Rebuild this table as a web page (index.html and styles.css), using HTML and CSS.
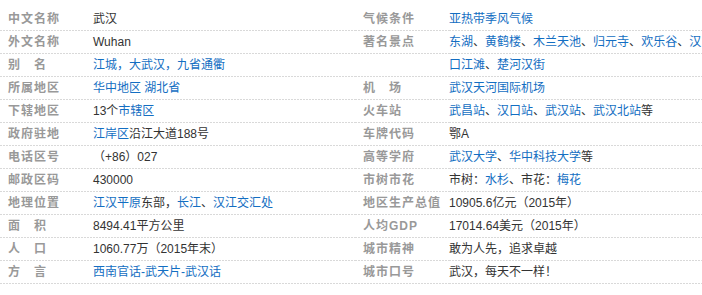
FILE: index.html
```html
<!DOCTYPE html>
<html lang="zh-CN">
<head>
<meta charset="utf-8">
<title>武汉 基本信息</title>
<link rel="stylesheet" href="styles.css">
</head>
<body>
<div class="basic-info">
  <dl class="block block-left">
    <dt>中文名称</dt><dd>武汉</dd>
    <dt>外文名称</dt><dd>Wuhan</dd>
    <dt>别　名</dt><dd><a>江城，大武汉，九省通衢</a></dd>
    <dt>所属地区</dt><dd><a>华中地区</a> <a>湖北省</a></dd>
    <dt>下辖地区</dt><dd>13个<a>市辖区</a></dd>
    <dt>政府驻地</dt><dd><a>江岸区</a>沿江大道188号</dd>
    <dt>电话区号</dt><dd>（+86）027</dd>
    <dt>邮政区码</dt><dd>430000</dd>
    <dt>地理位置</dt><dd><a>江汉平原</a>东部，<a>长江</a>、<a>汉江交汇处</a></dd>
    <dt>面　积</dt><dd>8494.41平方公里</dd>
    <dt>人　口</dt><dd>1060.77万（2015年末）</dd>
    <dt>方　言</dt><dd><a>西南官话-武天片-武汉话</a></dd>
  </dl>
  <dl class="block block-right">
    <dt>气候条件</dt><dd><a>亚热带季风气候</a></dd>
    <dt>著名景点</dt><dd class="span2"><a>东湖</a>、<a>黄鹤楼</a>、<a>木兰天池</a>、<a>归元寺</a>、<a>欢乐谷</a>、<a>汉口江滩</a>、<a>楚河汉街</a></dd>
    <dt class="empty"></dt>
    <dt>机　场</dt><dd><a>武汉天河国际机场</a></dd>
    <dt>火车站</dt><dd><a>武昌站</a>、<a>汉口站</a>、<a>武汉站</a>、<a>武汉北站</a>等</dd>
    <dt>车牌代码</dt><dd>鄂A</dd>
    <dt>高等学府</dt><dd><a>武汉大学</a>、<a>华中科技大学</a>等</dd>
    <dt>市树市花</dt><dd>市树：<a>水杉</a>、市花：<a>梅花</a></dd>
    <dt>地区生产总值</dt><dd>10905.6亿元（2015年）</dd>
    <dt>人均GDP</dt><dd>17014.64美元（2015年）</dd>
    <dt>城市精神</dt><dd>敢为人先，追求卓越</dd>
    <dt>城市口号</dt><dd>武汉，每天不一样！</dd>
  </dl>
</div>
</body>
</html>
```
FILE: styles.css
```css
html, body {
  margin: 0;
  padding: 0;
  background: #fff;
}

body {
  padding-top: 8px;
  font-family: "Liberation Sans", "Noto Sans CJK SC", sans-serif;
  font-size: 12px;
  color: #333;
}

.basic-info {
  display: flex;
  width: 702px;
}

.block {
  margin: 0;
  display: grid;
  grid-auto-rows: 23px;
}

.block-left {
  width: 355px;
  grid-template-columns: 93px 1fr;
}

.block-right {
  flex: 1;
  min-width: 0;
  grid-template-columns: 94px 1fr;
}

.block dt,
.block dd {
  margin: 0;
  height: 23px;
  box-sizing: border-box;
  line-height: 22px;
  white-space: nowrap;
  background-image: linear-gradient(to right, #d9d9d9 2px, transparent 2px);
  background-size: 3px 1px;
  background-repeat: repeat-x;
  background-position: 0 100%;
}

.block dt {
  padding-left: 8px;
  color: #999;
  font-weight: bold;
  letter-spacing: 1px;
}

.block dd.span2 {
  grid-row: span 2;
  height: 46px;
  line-height: 23px;
  white-space: normal;
  background-image:
    linear-gradient(to right, #d9d9d9 2px, transparent 2px),
    linear-gradient(to right, #d9d9d9 2px, transparent 2px);
  background-size: 3px 1px, 3px 1px;
  background-repeat: repeat-x, repeat-x;
  background-position: 0 22px, 0 45px;
}

.block a {
  color: #136ec2;
  text-decoration: none;
}
```
